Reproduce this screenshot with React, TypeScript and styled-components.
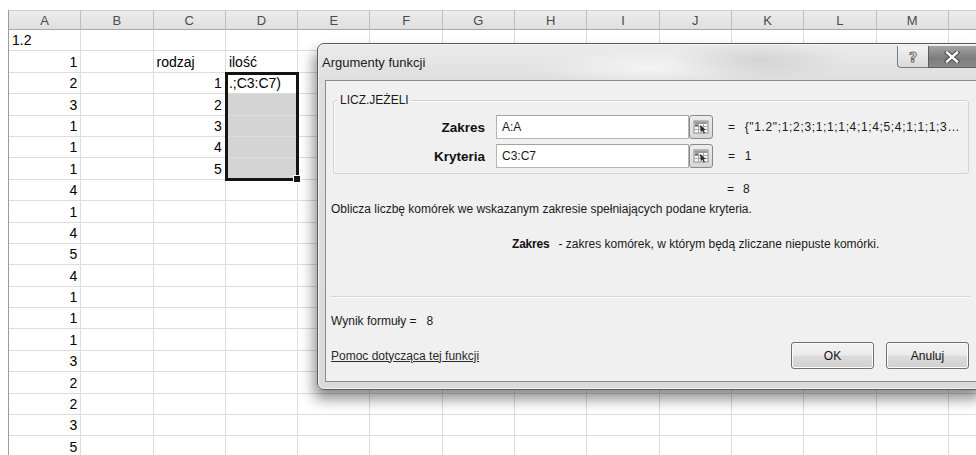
import React from 'react';
import styled, { createGlobalStyle } from 'styled-components';

const GlobalStyle = createGlobalStyle`
  html, body {
    margin: 0;
    padding: 0;
    background: #ffffff;
  }
  body {
    font-family: 'Liberation Sans', Arial, sans-serif;
    color: #000;
  }
`;

type Align = 'left' | 'right';

interface CellData {
  text: string;
  align?: Align;
}

// the last column only peeks in at the right edge, so it gets no letter
const COLUMNS = ['A', 'B', 'C', 'D', 'E', 'F', 'G', 'H', 'I', 'J', 'K', 'L', 'M', ''];

// values in column A, one per row
const columnA = ['1.2', '1', '2', '3', '1', '1', '1', '4', '1', '4', '5', '4', '1', '1', '1', '3', '2', '2', '3', '5'];

// other filled cells, keyed by "row:column"
const cells: Record<string, CellData> = {
  '2:C': { text: 'rodzaj', align: 'left' },
  '2:D': { text: 'ilość', align: 'left' },
  '3:C': { text: '1' },
  '3:D': { text: '.;C3:C7)', align: 'left' },
  '4:C': { text: '2' },
  '5:C': { text: '3' },
  '6:C': { text: '4' },
  '7:C': { text: '5' },
};

const isShaded = (row: number, col: string) => col === 'D' && row >= 4 && row <= 7;

const Screen = styled.div`
  position: relative;
  width: 976px;
  height: 455px;
  overflow: hidden;
  background: #fff;
`;

const Sheet = styled.div`
  position: relative;
  margin: 10px 0 0 8px;
  display: grid;
  grid-template-columns: repeat(14, 72.3px);
  grid-template-rows: 20px;
  grid-auto-rows: 21.4px;
  border-left: 1px solid #9c9c9c;
`;

const ColumnHeader = styled.div`
  display: flex;
  align-items: center;
  justify-content: center;
  box-sizing: border-box;
  background: linear-gradient(#ececec, #dfdfdf);
  border-right: 1px solid #bdbdbd;
  border-bottom: 1px solid #a9a9a9;
  border-top: 1px solid #d0d0d0;
  color: #4b4b4b;
  font-size: 13px;
`;

const Cell = styled.div<{ $align: Align; $shaded: boolean }>`
  display: flex;
  align-items: flex-end;
  justify-content: ${(p) => (p.$align === 'right' ? 'flex-end' : 'flex-start')};
  box-sizing: border-box;
  padding: 0 3px 2px 3px;
  border-right: 1px solid #dadcdd;
  border-bottom: 1px solid #dadcdd;
  background: ${(p) => (p.$shaded ? '#d4d4d4' : '#fff')};
  font-size: 14px;
  line-height: 16px;
  white-space: nowrap;
  overflow: hidden;
`;

// thick frame round D3:D7 with the fill handle in its corner
const Selection = styled.div`
  position: absolute;
  left: 216px;
  top: 62px;
  width: 74px;
  height: 109px;
  box-sizing: border-box;
  border: 3px solid #141414;
  pointer-events: none;
`;

const FillHandle = styled.div`
  position: absolute;
  right: -5px;
  bottom: -5px;
  width: 6px;
  height: 6px;
  background: #141414;
  border: 1px solid #fff;
`;

const Dialog = styled.div`
  position: absolute;
  left: 317px;
  top: 43px;
  width: 668px;
  height: 347px;
  box-sizing: border-box;
  display: flex;
  flex-direction: column;
  border: 1px solid #5a5a5a;
  border-radius: 7px;
  background:
    radial-gradient(ellipse 90px 20px at 440px 16px, rgba(160, 160, 160, 0.25), transparent),
    radial-gradient(ellipse 120px 20px at 330px 24px, rgba(255, 255, 255, 0.6), transparent),
    linear-gradient(#ebebeb 0px, #dedede 36px, #dadada 100%);
  box-shadow: -3px 9px 14px rgba(0, 0, 0, 0.45), inset 0 0 0 1px #f4f4f4;
  font-family: 'Liberation Sans', Arial, sans-serif;
  font-size: 12px;
  color: #1a1a1a;
`;

const TitleBar = styled.div`
  display: flex;
  align-items: flex-start;
  height: 36px;
  padding-left: 4px;
`;

const Title = styled.div`
  margin-top: 11px;
  font-size: 13px;
  line-height: 16px;
  color: #202020;
`;

const CaptionButtons = styled.div`
  display: flex;
  margin-left: auto;
  margin-top: 2px;
`;

const HelpButton = styled.div`
  width: 31px;
  height: 22px;
  box-sizing: border-box;
  display: flex;
  align-items: center;
  justify-content: center;
  border: 1px solid #7b7b7b;
  border-top: none;
  border-right: none;
  border-radius: 0 0 0 4px;
  background: linear-gradient(#f3f3f3, #dadada);
  font-family: 'DejaVu Sans', sans-serif;
  font-weight: bold;
  font-size: 14px;
  color: #f2f2f2;
  -webkit-text-stroke: 1px #6e6e6e;
`;

const CloseButton = styled.div`
  width: 56px;
  height: 22px;
  box-sizing: border-box;
  display: flex;
  align-items: center;
  justify-content: center;
  padding-right: 8px;
  border: 1px solid #5c5c5c;
  border-top: none;
  background: linear-gradient(#a3a3a3, #7c7c7c 60%, #8a8a8a);
`;

const Client = styled.div`
  flex: 1;
  display: flex;
  flex-direction: column;
  margin: 0 7px 7px 7px;
  padding: 0 7px 0 5px;
  background: #f0f0f0;
  border: 1px solid #8c8c8c;
`;

const Group = styled.fieldset`
  margin: 12px 0 0 2px;
  padding: 8px 0 5px 0;
  border: 1px solid #d2d2d2;
  border-radius: 3px;
  box-shadow: inset 1px 1px 0 #fbfbfb;
  display: flex;
  flex-direction: column;
  gap: 5px;
`;

const Legend = styled.legend`
  margin-left: 4px;
  padding: 0 2px;
  font-size: 12px;
  line-height: 14px;
  color: #1a1a1a;
`;

const ArgRow = styled.div`
  display: flex;
  align-items: center;
  height: 24px;
`;

const ArgLabel = styled.div`
  width: 151px;
  margin-right: 11px;
  text-align: right;
  font-weight: bold;
  font-size: 13.5px;
  color: #111;
`;

const ArgInput = styled.div`
  width: 193px;
  height: 24px;
  box-sizing: border-box;
  display: flex;
  align-items: center;
  padding-left: 5px;
  background: #fff;
  border: 1px solid #b5b5b5;
  border-top-color: #a3a3a3;
  font-size: 12px;
`;

const PickerButton = styled.div`
  width: 24px;
  height: 24px;
  box-sizing: border-box;
  display: flex;
  align-items: center;
  justify-content: center;
  border: 1px solid #8a8a8a;
  border-radius: 3px;
  background: linear-gradient(#eeeeee, #d6d6d6);
`;

const ArgValue = styled.div`
  margin-left: 15px;
  display: flex;
  gap: 9px;
  font-size: 12px;
  letter-spacing: 0.65px;
  white-space: nowrap;
  color: #1a1a1a;
`;

const ResultLine = styled.div`
  margin: 7px 0 0 396px;
  display: flex;
  gap: 9px;
  line-height: 16px;
`;

const Description = styled.div`
  margin-top: 4px;
  line-height: 16px;
`;

const ArgHelp = styled.div`
  margin: 19px 0 0 181px;
  display: flex;
  align-items: baseline;
  gap: 9px;
  line-height: 16px;
`;

const ArgHelpName = styled.span`
  font-weight: bold;
  font-size: 12px;
  letter-spacing: -0.2px;
  color: #111;
`;

const Separator = styled.div`
  margin: 44px -1px 0 0;
  height: 1px;
  background: #d5d5d5;
  box-shadow: 0 1px 0 #fafafa;
`;

const FormulaResult = styled.div`
  margin-top: 16px;
  line-height: 16px;
`;

const Footer = styled.div`
  display: flex;
  align-items: center;
  margin-top: 13px;
`;

const HelpLink = styled.span`
  text-decoration: underline;
  color: #2a2a2a;
  line-height: 16px;
`;

const Buttons = styled.div`
  display: flex;
  gap: 12px;
  margin-left: auto;
`;

const Button = styled.div`
  width: 83px;
  height: 27px;
  box-sizing: border-box;
  display: flex;
  align-items: center;
  justify-content: center;
  border: 1px solid #707070;
  border-radius: 3px;
  background: linear-gradient(#f2f2f2 0%, #ebebeb 48%, #dddddd 52%, #cfcfcf 100%);
  box-shadow: inset 0 0 0 1px #fbfbfb;
  font-size: 12px;
  color: #111;
`;

const CloseIcon = () => (
  <svg width="16" height="12" viewBox="0 0 16 12">
    <path d="M3 1.5 L13 10.5 M13 1.5 L3 10.5" stroke="#4a4a4a" strokeWidth="4.4" strokeLinecap="square" />
    <path d="M3 1.5 L13 10.5 M13 1.5 L3 10.5" stroke="#ffffff" strokeWidth="2.4" strokeLinecap="square" />
  </svg>
);

// small sheet with an arrow, the range picker glyph
const PickerIcon = () => (
  <svg width="16" height="16" viewBox="0 0 16 16">
    <rect x="1" y="2" width="14" height="12" fill="#f7f7f7" stroke="#8c8c8c" />
    <rect x="1.5" y="2.5" width="13" height="2.5" fill="#9a9a9a" />
    <path d="M1 7.5 H15 M1 10.5 H15 M5.5 5 V14 M10.5 5 V14" stroke="#a8a8a8" strokeWidth="1" />
    <rect x="2" y="5.5" width="3" height="1.5" fill="#5a5a5a" />
    <path d="M7 6 L13 11 L10.5 11.2 L12 13.8 L10.8 14.4 L9.4 11.8 L7.8 13.3 Z" fill="#2e2e2e" />
  </svg>
);

const App: React.FC = () => {
  return (
    <Screen>
      <GlobalStyle />
      <Sheet>
        {COLUMNS.map((col, i) => (
          <ColumnHeader key={`h${i}`}>{col}</ColumnHeader>
        ))}
        {columnA.map((value, i) => {
          const row = i + 1;
          return COLUMNS.map((col, c) => {
            const data: CellData | undefined =
              col === 'A' ? { text: value, align: row === 1 ? 'left' : 'right' } : cells[`${row}:${col}`];
            return (
              <Cell key={`${row}-${c}`} $align={data?.align ?? 'right'} $shaded={isShaded(row, col)}>
                {data?.text}
              </Cell>
            );
          });
        })}
        <Selection>
          <FillHandle />
        </Selection>
      </Sheet>

      <Dialog>
        <TitleBar>
          <Title>Argumenty funkcji</Title>
          <CaptionButtons>
            <HelpButton>?</HelpButton>
            <CloseButton>
              <CloseIcon />
            </CloseButton>
          </CaptionButtons>
        </TitleBar>
        <Client>
          <Group>
            <Legend>LICZ.JEŻELI</Legend>
            <ArgRow>
              <ArgLabel>Zakres</ArgLabel>
              <ArgInput>A:A</ArgInput>
              <PickerButton>
                <PickerIcon />
              </PickerButton>
              <ArgValue>
                <span>=</span>
                <span>{'{"1.2";1;2;3;1;1;1;4;1;4;5;4;1;1;1;3…'}</span>
              </ArgValue>
            </ArgRow>
            <ArgRow>
              <ArgLabel>Kryteria</ArgLabel>
              <ArgInput>C3:C7</ArgInput>
              <PickerButton>
                <PickerIcon />
              </PickerButton>
              <ArgValue>
                <span>=</span>
                <span>1</span>
              </ArgValue>
            </ArgRow>
          </Group>
          <ResultLine>
            <span>=</span>
            <span>8</span>
          </ResultLine>
          <Description>Oblicza liczbę komórek we wskazanym zakresie spełniających podane kryteria.</Description>
          <ArgHelp>
            <ArgHelpName>Zakres</ArgHelpName>
            <span>- zakres komórek, w którym będą zliczane niepuste komórki.</span>
          </ArgHelp>
          <Separator />
          <FormulaResult>Wynik formuły =&nbsp;&nbsp;&nbsp;8</FormulaResult>
          <Footer>
            <HelpLink>Pomoc dotycząca tej funkcji</HelpLink>
            <Buttons>
              <Button>OK</Button>
              <Button>Anuluj</Button>
            </Buttons>
          </Footer>
        </Client>
      </Dialog>
    </Screen>
  );
};

export default App;
